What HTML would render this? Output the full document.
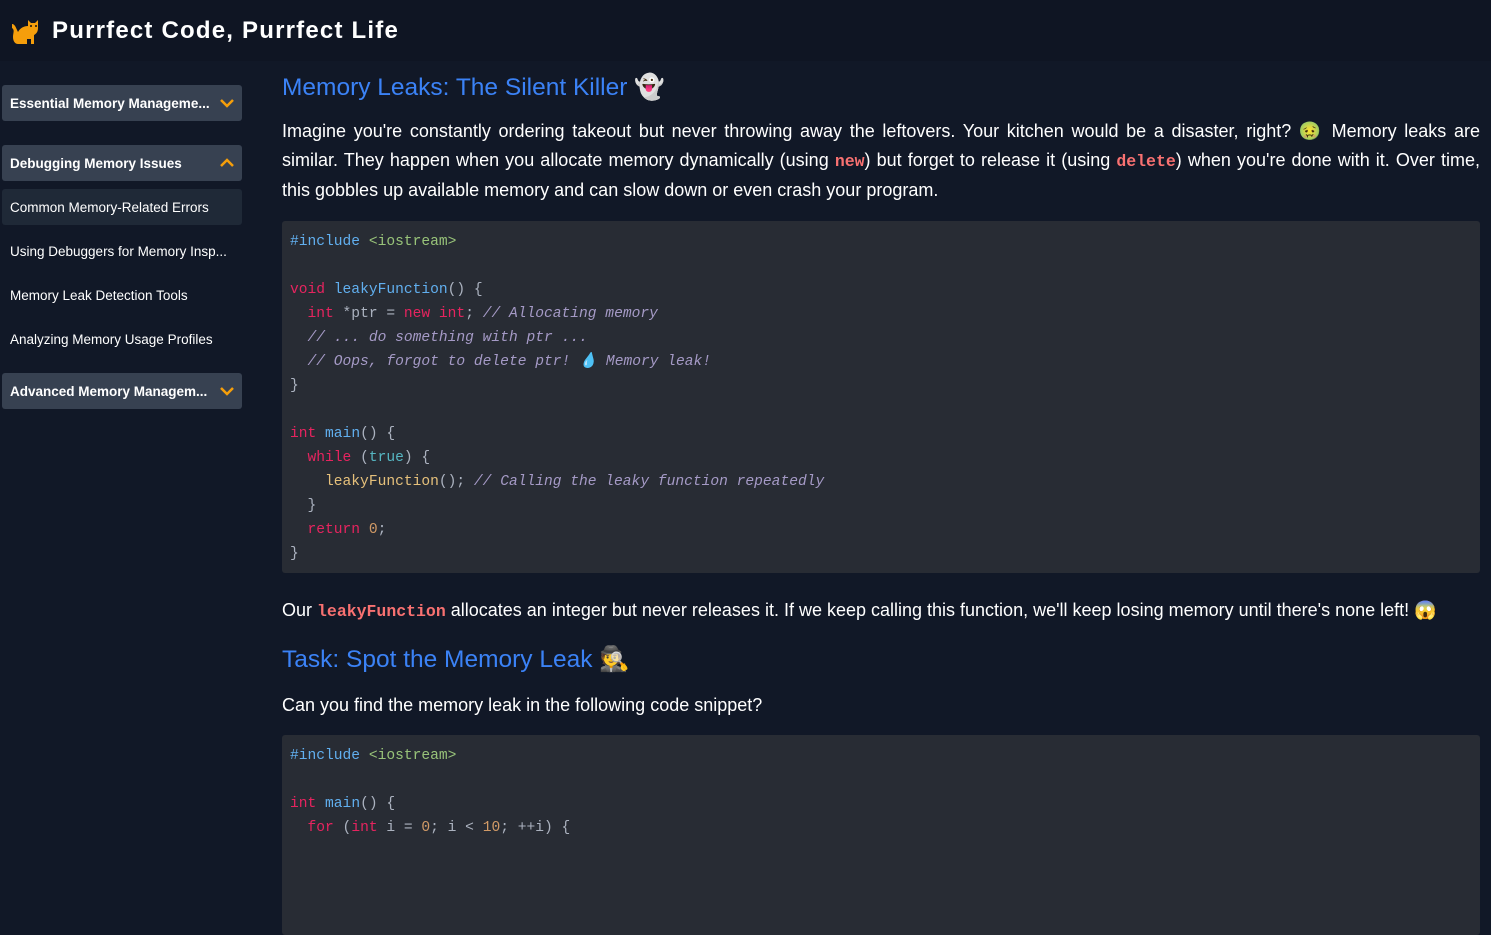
<!DOCTYPE html>
<html><head><meta charset="utf-8"><style>
*{box-sizing:border-box;margin:0;padding:0}
html,body{width:1491px;height:825px;overflow:hidden}
body{background:#111827;font-family:"Liberation Sans","Noto Sans CJK SC",sans-serif;color:#fff}
.hdr{height:61px;background:#0f1523;display:flex;align-items:center;padding-left:10px}
.hdr span{font-size:24px;font-weight:bold;margin-left:10px;letter-spacing:1.2px}
.side{position:absolute;left:2px;top:85px;width:240px}
.btn{height:36px;background:#374151;border-radius:3px;display:flex;align-items:center;justify-content:space-between;padding:0 8px;font-size:13.5px;font-weight:bold;white-space:nowrap}
.item{height:36px;display:flex;align-items:center;padding-left:8px;font-size:13.5px;margin-bottom:8px;white-space:nowrap}
.item.sel{background:#1f2937;border-radius:3px}
.main{position:absolute;left:282px;top:68px;width:1198px}
h2{color:#3b82f6;font-size:24.5px;font-weight:normal;height:38px;line-height:40px}
p{font-size:18px;line-height:29px;text-align:justify}
pre{background:#282c34;border-radius:3px;padding:9px 8px;font-family:"Liberation Mono",monospace;font-size:14.6px;line-height:24px;color:#abb2bf}
.k{color:#e6245f}.f{color:#61afef}.s{color:#98c379}.c{color:#a59ac6;font-style:italic}.y{color:#e5c07b}.t{color:#56b6c2}.n{color:#d19a66}.b{color:#61afef}
code.i{font-family:"Liberation Mono",monospace;color:#f87171;font-weight:bold;font-size:16.5px}
</style></head><body>
<div class="hdr"><svg width="32" height="30" viewBox="0 0 32 30"><path d="M2 8c3 0 4 4 6 8 2-4 6-6 10-6l0-6 3 3h4l3-3v8c0 4-2 6-4 7v9h-3v-5h-4v5H8c-3 0-5-3-5-7 0-4 2-7-1-9z" fill="#f59e0b"/><circle cx="21" cy="10" r="1" fill="#111"/><circle cx="26" cy="10" r="1" fill="#111"/></svg><span>Purrfect Code, Purrfect Life</span></div>
<div class="side">
<div class="btn">Essential Memory Manageme...<svg width="14" height="10" viewBox="0 0 14 10"><path d="M1 2l6 6 6-6" stroke="#f59e0b" stroke-width="2.5" fill="none"/></svg></div>
<div style="height:24px"></div>
<div class="btn" style="margin-bottom:8px">Debugging Memory Issues<svg width="14" height="10" viewBox="0 0 14 10"><path d="M1 8l6-6 6 6" stroke="#f59e0b" stroke-width="2.5" fill="none"/></svg></div>
<div class="item sel">Common Memory-Related Errors</div>
<div class="item">Using Debuggers for Memory Insp...</div>
<div class="item">Memory Leak Detection Tools</div>
<div class="item">Analyzing Memory Usage Profiles</div>
<div class="btn" style="margin-top:16px">Advanced Memory Managem...<svg width="14" height="10" viewBox="0 0 14 10"><path d="M1 2l6 6 6-6" stroke="#f59e0b" stroke-width="2.5" fill="none"/></svg></div>
</div>
<div class="main">
<h2>Memory Leaks: The Silent Killer 👻</h2>
<p style="margin-top:11px">Imagine you're constantly ordering takeout but never throwing away the leftovers. Your kitchen would be a disaster, right? 🤢 Memory leaks are similar. They happen when you allocate memory dynamically (using <code class="i">new</code>) but forget to release it (using <code class="i">delete</code>) when you're done with it. Over time, this gobbles up available memory and can slow down or even crash your program.</p>
<pre style="margin-top:16px;height:352px"><span class="b">#include</span> <span class="s">&lt;iostream&gt;</span>

<span class="k">void</span> <span class="f">leakyFunction</span>() {
  <span class="k">int</span> *ptr = <span class="k">new</span> <span class="k">int</span>; <span class="c">// Allocating memory</span>
  <span class="c">// ... do something with ptr ...</span>
  <span class="c">// Oops, forgot to delete ptr! 💧 Memory leak!</span>
}

<span class="k">int</span> <span class="f">main</span>() {
  <span class="k">while</span> (<span class="t">true</span>) {
    <span class="y">leakyFunction</span>(); <span class="c">// Calling the leaky function repeatedly</span>
  }
  <span class="k">return</span> <span class="n">0</span>;
}</pre>
<p style="margin-top:23px">Our <code class="i">leakyFunction</code> allocates an integer but never releases it. If we keep calling this function, we'll keep losing memory until there's none left! 😱</p>
<h2 style="margin-top:14px">Task: Spot the Memory Leak 🕵️</h2>
<p style="margin-top:13px">Can you find the memory leak in the following code snippet?</p>
<pre style="margin-top:15px;height:200px"><span class="b">#include</span> <span class="s">&lt;iostream&gt;</span>

<span class="k">int</span> <span class="f">main</span>() {
  <span class="k">for</span> (<span class="k">int</span> i = <span class="n">0</span>; i &lt; <span class="n">10</span>; ++i) {</pre>
</div>
</body></html>
